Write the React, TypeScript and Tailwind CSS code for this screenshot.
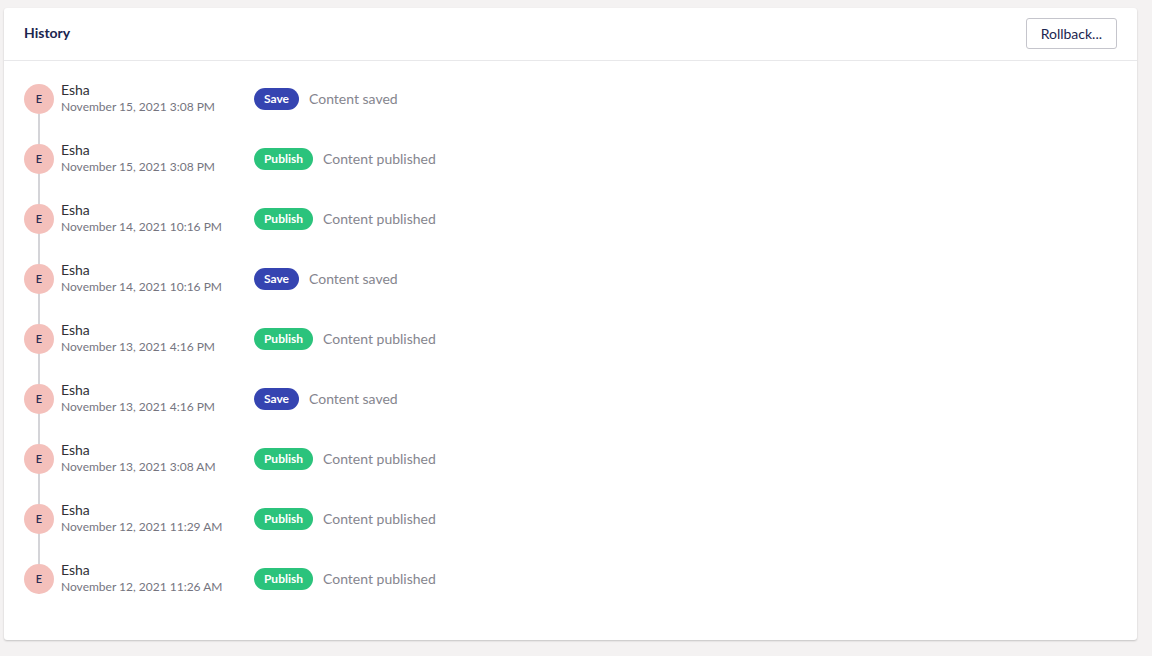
const entries = [
  { date: 'November 15, 2021 3:08 PM', type: 'save' },
  { date: 'November 15, 2021 3:08 PM', type: 'publish' },
  { date: 'November 14, 2021 10:16 PM', type: 'publish' },
  { date: 'November 14, 2021 10:16 PM', type: 'save' },
  { date: 'November 13, 2021 4:16 PM', type: 'publish' },
  { date: 'November 13, 2021 4:16 PM', type: 'save' },
  { date: 'November 13, 2021 3:08 AM', type: 'publish' },
  { date: 'November 12, 2021 11:29 AM', type: 'publish' },
  { date: 'November 12, 2021 11:26 AM', type: 'publish' },
]

function Badge({ type }: { type: string }) {
  if (type === 'save') {
    return <span className="h-[22px] w-[45px] rounded-full bg-[#3544b1] text-white text-xs font-bold flex items-center justify-center">Save</span>
  }
  return <span className="h-[22px] w-[59px] rounded-full bg-[#2bc37c] text-white text-xs font-bold flex items-center justify-center">Publish</span>
}

function Row({ date, type, last }: { date: string; type: string; last: boolean }) {
  return (
    <div className="relative flex items-start h-[60px]">
      {!last && <div className="absolute left-[14px] top-[30px] h-[60px] w-[2px] bg-[#d4d4d8]" />}
      <div className="relative z-10 w-[30px] h-[30px] rounded-full bg-[#f4c0bb] flex items-center justify-center text-[11px] font-semibold text-[#2b2d55] shrink-0">E</div>
      <div className="ml-[7px] w-[193px] -mt-[2px]">
        <p className="text-sm leading-4 text-[#303036]">Esha</p>
        <p className="text-xs leading-4 mt-[1px] text-[#75757f]">{date}</p>
      </div>
      <div className="flex items-center h-[30px] gap-[10px]">
        <Badge type={type} />
        <span className="text-sm text-[#85858e]">{type === 'save' ? 'Content saved' : 'Content published'}</span>
      </div>
    </div>
  )
}

export default function App() {
  return (
    <div className="w-[1152px] h-[656px] bg-[#f4f2f2] pt-2 pl-1" style={{ fontFamily: 'Lato, "Open Sans", sans-serif' }}>
      <div className="w-[1133px] h-[632px] bg-white rounded-[3px] shadow-[0_1px_2px_rgba(0,0,0,0.2)]">
        <div className="h-[53px] pb-[1px] flex items-center justify-between px-5 border-b border-[#e8e8ea]">
          <h2 className="text-sm font-bold text-[#1b264f] -mt-[2px]">History</h2>
          <button className="h-[31px] px-[14px] rounded-[3px] border border-[#c5c5cc] text-sm text-[#1b264f] bg-white">Rollback...</button>
        </div>
        <div className="px-5 pt-[23px]">
          {entries.map((e, i) => (
            <Row key={i} date={e.date} type={e.type} last={i === entries.length - 1} />
          ))}
        </div>
      </div>
    </div>
  )
}
